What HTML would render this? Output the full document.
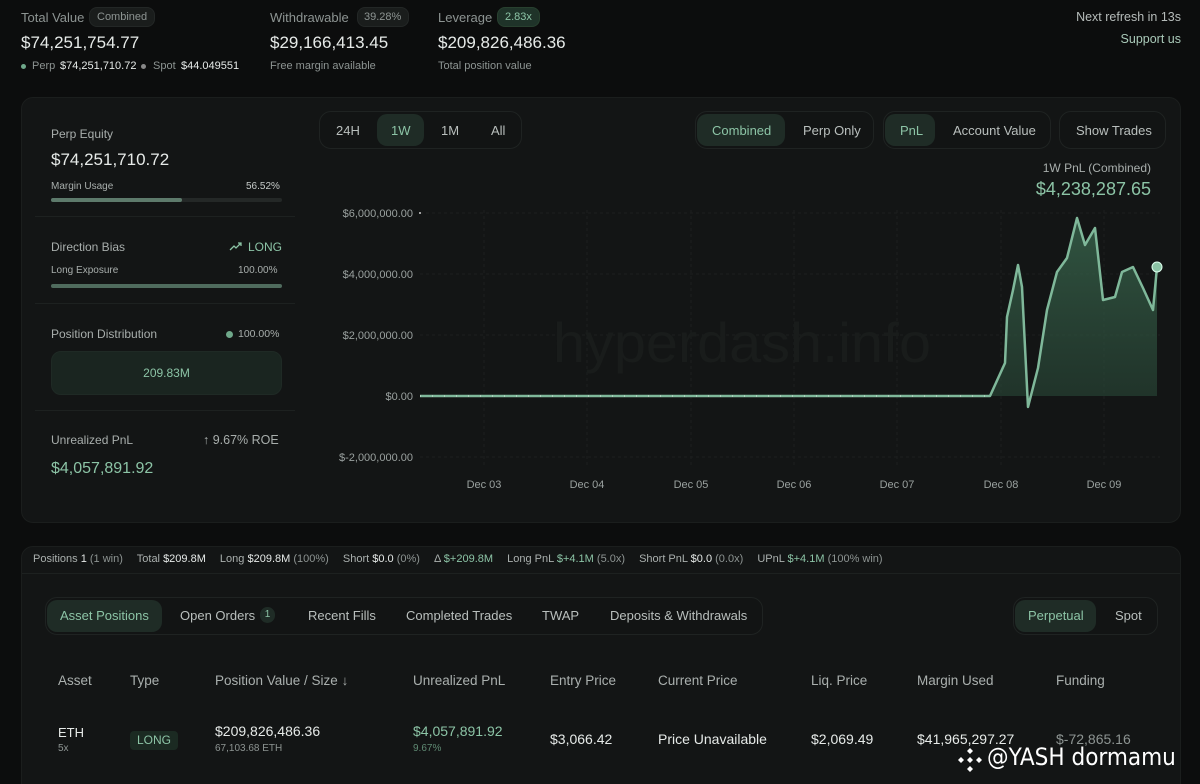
<!DOCTYPE html>
<html><head><meta charset="utf-8"><style>
*{margin:0;padding:0;box-sizing:border-box}
html,body{width:1200px;height:784px;overflow:hidden}
body{background:#0c0d0d;font-family:"Liberation Sans",sans-serif;color:#e6eae8;position:relative}
.a{position:absolute;white-space:nowrap}
.dim{color:#8d9492}
.g{color:#8cc4a6}
.pill{position:absolute;border-radius:8px;background:#1a1d1c;border:1px solid #232726}
.card{position:absolute;background:#131515;border:1px solid #1b1e1d;border-radius:12px}
.seg{position:absolute;border:1px solid #1f2322;border-radius:12px;background:#121414}
.on{position:absolute;background:#1f2c26;border-radius:10px}
.t13{font-size:13px}
.sep{position:absolute;height:1px;background:#1d2120}
.pb span.k{margin-left:11px}
</style></head><body>
<!-- top -->
<div class="a dim" style="left:21px;top:10px;font-size:13px">Total Value</div>
<div class="pill" style="left:89px;top:7px;width:66px;height:20px"></div>
<div class="a dim" style="left:97px;top:11px;font-size:11px">Combined</div>
<div class="a" style="left:21px;top:33px;font-size:17px">$74,251,754.77</div>
<div class="a" style="left:21px;top:64px;width:5px;height:5px;border-radius:50%;background:#6fa88a"></div>
<div class="a dim" style="left:32px;top:60px;font-size:11px">Perp</div>
<div class="a" style="left:60px;top:60px;font-size:11px">$74,251,710.72</div>
<div class="a" style="left:141px;top:64px;width:5px;height:5px;border-radius:50%;background:#888"></div>
<div class="a dim" style="left:153px;top:60px;font-size:11px">Spot</div>
<div class="a" style="left:181px;top:60px;font-size:11px">$44.049551</div>

<div class="a dim" style="left:270px;top:10px;font-size:13px">Withdrawable</div>
<div class="pill" style="left:357px;top:7px;width:52px;height:20px"></div>
<div class="a dim" style="left:364px;top:11px;font-size:11px">39.28%</div>
<div class="a" style="left:270px;top:33px;font-size:17px">$29,166,413.45</div>
<div class="a dim" style="left:270px;top:60px;font-size:11px">Free margin available</div>

<div class="a dim" style="left:438px;top:10px;font-size:13px">Leverage</div>
<div class="pill" style="left:497px;top:7px;width:43px;height:20px;background:#1f3329;border-color:#28402f"></div>
<div class="a g" style="left:505px;top:11px;font-size:11px">2.83x</div>
<div class="a" style="left:438px;top:33px;font-size:17px">$209,826,486.36</div>
<div class="a dim" style="left:438px;top:60px;font-size:11px">Total position value</div>

<div class="a" style="right:19px;top:10px;font-size:12.5px;color:#b6bcba">Next refresh in 13s</div>
<div class="a" style="right:19px;top:32px;font-size:12.5px;color:#a9c9b8">Support us</div>

<!-- main card -->
<div class="card" style="left:21px;top:97px;width:1160px;height:426px"></div>
<div class="a dim" style="left:51px;top:127px;font-size:12px;color:#a8aeac">Perp Equity</div>
<div class="a" style="left:51px;top:150px;font-size:17px">$74,251,710.72</div>
<div class="a dim" style="left:51px;top:181px;font-size:10px;color:#a8aeac">Margin Usage</div>
<div class="a" style="left:246px;top:181px;font-size:10px;color:#c6cbc9">56.52%</div>
<div class="a" style="left:51px;top:198px;width:231px;height:4px;border-radius:2px;background:#242827"></div>
<div class="a" style="left:51px;top:198px;width:131px;height:4px;border-radius:2px;background:#5d7a6b"></div>
<div class="sep" style="left:35px;top:216px;width:260px"></div>

<div class="a" style="left:51px;top:240px;font-size:12px;color:#a8aeac">Direction Bias</div>
<svg class="a" style="left:229px;top:241px" width="14" height="12" viewBox="0 0 14 12"><path d="M1 9 L5 5 L7 7 L12 2 M9 2 H12 V5" stroke="#8cc4a6" stroke-width="1.3" fill="none"/></svg>
<div class="a g" style="left:248px;top:240px;font-size:12px">LONG</div>
<div class="a" style="left:51px;top:265px;font-size:10px;color:#a8aeac">Long Exposure</div>
<div class="a" style="left:238px;top:265px;font-size:10px;color:#a8aeac">100.00%</div>
<div class="a" style="left:51px;top:284px;width:231px;height:4px;border-radius:2px;background:#4f6b5d"></div>
<div class="sep" style="left:35px;top:303px;width:260px"></div>

<div class="a" style="left:51px;top:327px;font-size:12px;color:#a8aeac">Position Distribution</div>
<div class="a" style="left:226px;top:331px;width:7px;height:7px;border-radius:50%;background:#6fa88a"></div>
<div class="a" style="left:238px;top:328px;font-size:10.5px;color:#a8aeac">100.00%</div>
<div class="a" style="left:51px;top:351px;width:231px;height:44px;border-radius:10px;background:#1a2520;border:1px solid #1f2a25"></div>
<div class="a g" style="left:51px;top:366px;width:231px;text-align:center;font-size:12px">209.83M</div>
<div class="sep" style="left:35px;top:410px;width:260px"></div>

<div class="a" style="left:51px;top:433px;font-size:12px;color:#a8aeac">Unrealized PnL</div>
<div class="a" style="left:203px;top:433px;font-size:12.5px;color:#a8aeac">↑ 9.67% ROE</div>
<div class="a g" style="left:51px;top:460px;font-size:16px">$4,057,891.92</div>

<!-- toggles -->
<div class="seg" style="left:319px;top:111px;width:203px;height:38px"></div>
<div class="on" style="left:377px;top:114px;width:47px;height:32px"></div>
<div class="a t13" style="left:336px;top:123px;color:#b9bfbd">24H</div>
<div class="a t13 g" style="left:391px;top:123px">1W</div>
<div class="a t13" style="left:441px;top:123px;color:#b9bfbd">1M</div>
<div class="a t13" style="left:491px;top:123px;color:#b9bfbd">All</div>

<div class="seg" style="left:695px;top:111px;width:179px;height:38px"></div>
<div class="on" style="left:697px;top:114px;width:88px;height:32px"></div>
<div class="a t13 g" style="left:712px;top:123px">Combined</div>
<div class="a t13" style="left:803px;top:123px;color:#b9bfbd">Perp Only</div>
<div class="seg" style="left:883px;top:111px;width:168px;height:38px"></div>
<div class="on" style="left:885px;top:114px;width:50px;height:32px"></div>
<div class="a t13 g" style="left:900px;top:123px">PnL</div>
<div class="a t13" style="left:953px;top:123px;color:#b9bfbd">Account Value</div>
<div class="seg" style="left:1059px;top:111px;width:107px;height:38px"></div>
<div class="a t13" style="left:1076px;top:123px;color:#b9bfbd">Show Trades</div>

<div class="a" style="right:49px;top:161px;font-size:12px;color:#a8aeac">1W PnL (Combined)</div>
<div class="a g" style="right:49px;top:179px;font-size:18px">$4,238,287.65</div>

<!-- chart -->
<svg class="a" style="left:0;top:0" width="1200" height="520">
<defs><linearGradient id="gr" x1="0" y1="0" x2="0" y2="1"><stop offset="0" stop-color="#3b6a50" stop-opacity=".75"/><stop offset="1" stop-color="#2a4a39" stop-opacity=".55"/></linearGradient></defs>
<g stroke="#1c1f1f" stroke-width="1" stroke-dasharray="3 3">
<line x1="420" y1="213" x2="1160" y2="213"/><line x1="420" y1="274" x2="1160" y2="274"/><line x1="420" y1="335" x2="1160" y2="335"/><line x1="420" y1="457" x2="1160" y2="457"/>
<line x1="484" y1="210" x2="484" y2="465"/><line x1="587" y1="210" x2="587" y2="465"/><line x1="691" y1="210" x2="691" y2="465"/><line x1="794" y1="210" x2="794" y2="465"/><line x1="897" y1="210" x2="897" y2="465"/><line x1="1001" y1="210" x2="1001" y2="465"/><line x1="1104" y1="210" x2="1104" y2="465"/>
</g>
<text x="742" y="362" font-family="Liberation Sans" font-size="56" fill="#191c1b" text-anchor="middle" textLength="378" lengthAdjust="spacingAndGlyphs">hyperdash.info</text>
<g font-family="Liberation Sans" font-size="11" fill="#9aa19f" text-anchor="end">
<text x="413" y="217">$6,000,000.00</text><text x="413" y="278">$4,000,000.00</text><text x="413" y="339">$2,000,000.00</text><text x="413" y="400">$0.00</text><text x="413" y="461">$-2,000,000.00</text></g>
<g font-family="Liberation Sans" font-size="11" fill="#9aa19f" text-anchor="middle">
<text x="484" y="488">Dec 03</text><text x="587" y="488">Dec 04</text><text x="691" y="488">Dec 05</text><text x="794" y="488">Dec 06</text><text x="897" y="488">Dec 07</text><text x="1001" y="488">Dec 08</text><text x="1104" y="488">Dec 09</text></g>
<circle cx="420" cy="213" r="1" fill="#ccc"/>
<path d="M990 396 L1005 363 L1007 317 L1013 290 L1018 265 L1022 287 L1028 407 L1038 368 L1047 310 L1057 272 L1067 258 L1077 218 L1085 245 L1095 228 L1103 300 L1115 297 L1122 272 L1133 267 L1143 288 L1153 310 L1157 267 L1157 396 Z" fill="url(#gr)"/>
<path d="M420 396 L990 396 L1005 363 L1007 317 L1013 290 L1018 265 L1022 287 L1028 407 L1038 368 L1047 310 L1057 272 L1067 258 L1077 218 L1085 245 L1095 228 L1103 300 L1115 297 L1122 272 L1133 267 L1143 288 L1153 310 L1157 267" fill="none" stroke="#7fb89a" stroke-width="2.5" stroke-linejoin="round"/>
<line x1="420" y1="396" x2="990" y2="396" stroke="#d8e6de" stroke-width="1" stroke-dasharray="1 11"/>
<circle cx="1157" cy="267" r="5" fill="#8cc4a6" stroke="#dfe" stroke-width="1"/>
</svg>

<!-- bottom -->
<div class="card" style="left:21px;top:546px;width:1160px;height:250px"></div>
<div class="sep" style="left:22px;top:573px;width:1158px"></div>
<div class="a pb" style="left:33px;top:553px;font-size:11px;color:#aab0ae">Positions <span style="color:#e6eae8">1</span> <span class="dim">(1 win)</span><span class="k"></span> Total <span style="color:#e6eae8">$209.8M</span><span class="k"></span> Long <span style="color:#e6eae8">$209.8M</span> <span class="dim">(100%)</span><span class="k"></span> Short <span style="color:#e6eae8">$0.0</span> <span class="dim">(0%)</span><span class="k"></span> Δ <span class="g">$+209.8M</span><span class="k"></span> Long PnL <span class="g">$+4.1M</span> <span class="dim">(5.0x)</span><span class="k"></span> Short PnL <span style="color:#e6eae8">$0.0</span> <span class="dim">(0.0x)</span><span class="k"></span> UPnL <span class="g">$+4.1M</span> <span class="dim">(100% win)</span></div>

<div class="seg" style="left:45px;top:597px;width:718px;height:38px"></div>
<div class="on" style="left:47px;top:600px;width:115px;height:32px"></div>
<div class="a t13 g" style="left:60px;top:608px">Asset Positions</div>
<div class="a t13" style="left:180px;top:608px;color:#b9bfbd">Open Orders</div>
<div class="a" style="left:260px;top:607px;width:15px;height:16px;border-radius:8px;background:#1f2c26;font-size:10px;color:#8cc4a6;text-align:center;line-height:16px">1</div>
<div class="a t13" style="left:308px;top:608px;color:#b9bfbd">Recent Fills</div>
<div class="a t13" style="left:406px;top:608px;color:#b9bfbd">Completed Trades</div>
<div class="a t13" style="left:542px;top:608px;color:#b9bfbd">TWAP</div>
<div class="a t13" style="left:610px;top:608px;color:#b9bfbd">Deposits &amp; Withdrawals</div>

<div class="seg" style="left:1013px;top:597px;width:145px;height:38px"></div>
<div class="on" style="left:1015px;top:600px;width:81px;height:32px"></div>
<div class="a t13 g" style="left:1028px;top:608px">Perpetual</div>
<div class="a t13" style="left:1115px;top:608px;color:#b9bfbd">Spot</div>

<div class="a" style="left:0;top:673px;font-size:13.5px;color:#aab0ae;width:1200px">
<span class="a" style="left:58px">Asset</span><span class="a" style="left:130px">Type</span><span class="a" style="left:215px">Position Value / Size ↓</span><span class="a" style="left:413px">Unrealized PnL</span><span class="a" style="left:550px">Entry Price</span><span class="a" style="left:658px">Current Price</span><span class="a" style="left:811px">Liq. Price</span><span class="a" style="left:917px">Margin Used</span><span class="a" style="left:1056px">Funding</span></div>

<div class="a" style="left:58px;top:725px;font-size:13px">ETH</div>
<div class="a dim" style="left:58px;top:743px;font-size:10px">5x</div>
<div class="a" style="left:130px;top:731px;width:48px;height:19px;border-radius:4px;background:#1b2a22;color:#8cc4a6;font-size:12px;text-align:center;line-height:19px">LONG</div>
<div class="a" style="left:215px;top:723px;font-size:14px">$209,826,486.36</div>
<div class="a dim" style="left:215px;top:743px;font-size:10px">67,103.68 ETH</div>
<div class="a g" style="left:413px;top:723px;font-size:14px">$4,057,891.92</div>
<div class="a" style="left:413px;top:743px;font-size:10px;color:#5f8a73">9.67%</div>
<div class="a" style="left:550px;top:731px;font-size:14px">$3,066.42</div>
<div class="a" style="left:658px;top:731px;font-size:14px">Price Unavailable</div>
<div class="a" style="left:811px;top:731px;font-size:14px">$2,069.49</div>
<div class="a" style="left:917px;top:731px;font-size:14px">$41,965,297.27</div>
<div class="a dim" style="left:1056px;top:731px;font-size:14px">$-72,865.16</div>

<svg class="a" style="left:956px;top:746px" width="28" height="28" viewBox="0 0 28 28"><g fill="#fff"><path d="M14 2l3 3-3 3-3-3z"/><path d="M14 20l3 3-3 3-3-3z"/><path d="M5 11l3 3-3 3-3-3z"/><path d="M23 11l3 3-3 3-3-3z"/><path d="M14 11l3 3-3 3-3-3z"/></g></svg>
<div class="a" style="left:987px;top:743px;font-size:24px;color:#fff;font-family:'DejaVu Sans Condensed','DejaVu Sans',sans-serif">@YASH dormamu</div>
</body></html>
